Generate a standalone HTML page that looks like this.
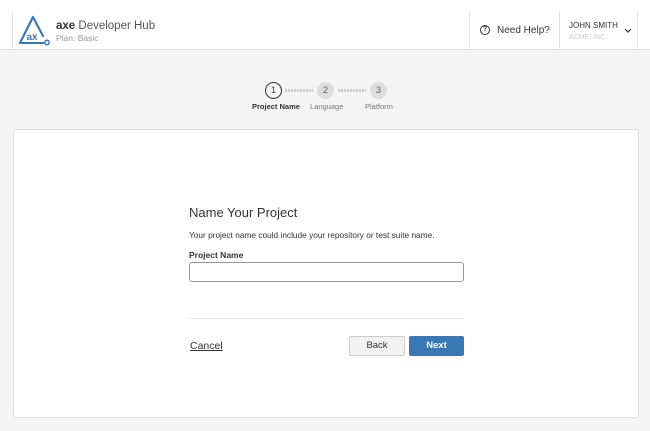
<!DOCTYPE html>
<html><head><meta charset="utf-8"><style>
*{box-sizing:border-box;margin:0;padding:0}
body{width:650px;height:431px;background:#f4f4f4;font-family:"Liberation Sans",Arial,sans-serif;position:relative;overflow:hidden;color:#333}
.hdr{position:absolute;left:0;top:0;width:650px;height:50px;background:#fff;border-bottom:1px solid #ddd}
.vl{position:absolute;top:12px;height:38px;border-left:1px solid #e2e2e2}
.abs{position:absolute;white-space:nowrap}
.card{position:absolute;left:13px;top:129px;width:626px;height:289px;background:#fff;border:1px solid #ddd;border-radius:3px}
.c{position:absolute;width:17px;height:17px;border-radius:50%;font-size:9px;text-align:center;line-height:15px}
.dots{position:absolute;top:89px;height:3px;width:28px;background:repeating-linear-gradient(90deg,#ccc 0 2px,#eee 2px 3px)}
.lab{position:absolute;top:102px;font-size:7.5px;color:#777}
</style></head><body>
<div class="hdr">
 <div class="vl" style="left:12px;border-color:#e6e6e6"></div>
 <div class="vl" style="left:469px"></div>
 <div class="vl" style="left:559px"></div>
 <div class="vl" style="left:637px"></div>
 <svg class="abs" style="left:18px;top:15px" width="34" height="32" viewBox="0 0 34 32">
  <path d="M15 2 L2 28 M15 2 L25 21" stroke="#3a78b5" stroke-width="2.2" fill="none" stroke-linecap="round"/>
  <path d="M3 28 H26" stroke="#3a78b5" stroke-width="2" fill="none"/>
  <circle cx="29" cy="27.5" r="2.2" stroke="#3a78b5" stroke-width="1.5" fill="#fff"/>
  <text x="8.5" y="25" font-size="10" font-weight="bold" fill="#3a78b5" font-family="Liberation Sans,sans-serif">ax</text>
 </svg>
 <div class="abs" style="left:56px;top:20px;font-size:11.5px;color:#555"><b style="font-weight:bold;color:#333">axe</b> Developer Hub</div>
 <div class="abs" style="left:56px;top:33px;font-size:8.5px;color:#999">Plan: Basic</div>
 <div class="abs" style="left:480px;top:25px;width:10px;height:10px;border:1.3px solid #333;border-radius:50%;font-size:7px;line-height:8px;text-align:center;font-weight:bold">?</div>
 <div class="abs" style="left:497px;top:25px;font-size:10px;color:#333">Need Help?</div>
 <div class="abs" style="left:569px;top:21px;font-size:8px;color:#333">JOHN SMITH</div>
 <div class="abs" style="left:569px;top:34px;font-size:7px;color:#ccc">ACME, INC.</div>
 <svg class="abs" style="left:624px;top:28px" width="8" height="6"><path d="M1 1 L4 4 L7 1" stroke="#333" stroke-width="1.2" fill="none"/></svg>
</div>
<div class="c" style="left:265px;top:82px;border:1.5px solid #333;color:#333">1</div>
<div class="dots" style="left:285px"></div>
<div class="c" style="left:317px;top:82px;background:#ddd;color:#666;line-height:17px">2</div>
<div class="dots" style="left:338px"></div>
<div class="c" style="left:370px;top:82px;background:#ddd;color:#666;line-height:17px">3</div>
<div class="lab" style="left:252px;color:#333;font-weight:bold">Project Name</div>
<div class="lab" style="left:310px">Language</div>
<div class="lab" style="left:365px">Platform</div>
<div class="card"></div>
<div class="abs" style="left:189px;top:205px;font-size:13px;color:#333">Name Your Project</div>
<div class="abs" style="left:189px;top:230px;font-size:8.3px;color:#333">Your project name could include your repository or test suite name.</div>
<div class="abs" style="left:189px;top:250px;font-size:8.5px;color:#333;font-weight:bold">Project Name</div>
<div class="abs" style="left:189px;top:262px;width:275px;height:20px;border:1px solid #999;border-radius:3px"></div>
<div class="abs" style="left:189px;top:318px;width:275px;border-top:1px solid #e4e4e4"></div>
<div class="abs" style="left:190px;top:340px;font-size:10.5px;text-decoration:underline;color:#333">Cancel</div>
<div class="abs" style="left:349px;top:336px;width:56px;height:20px;background:#f2f2f2;border:1px solid #ccc;border-radius:2px;font-size:9.5px;text-align:center;line-height:18px;color:#333">Back</div>
<div class="abs" style="left:409px;top:336px;width:55px;height:20px;background:#3a78b5;border-radius:2px;font-size:9.5px;text-align:center;line-height:20px;color:#fff;font-weight:bold">Next</div>
</body></html>
